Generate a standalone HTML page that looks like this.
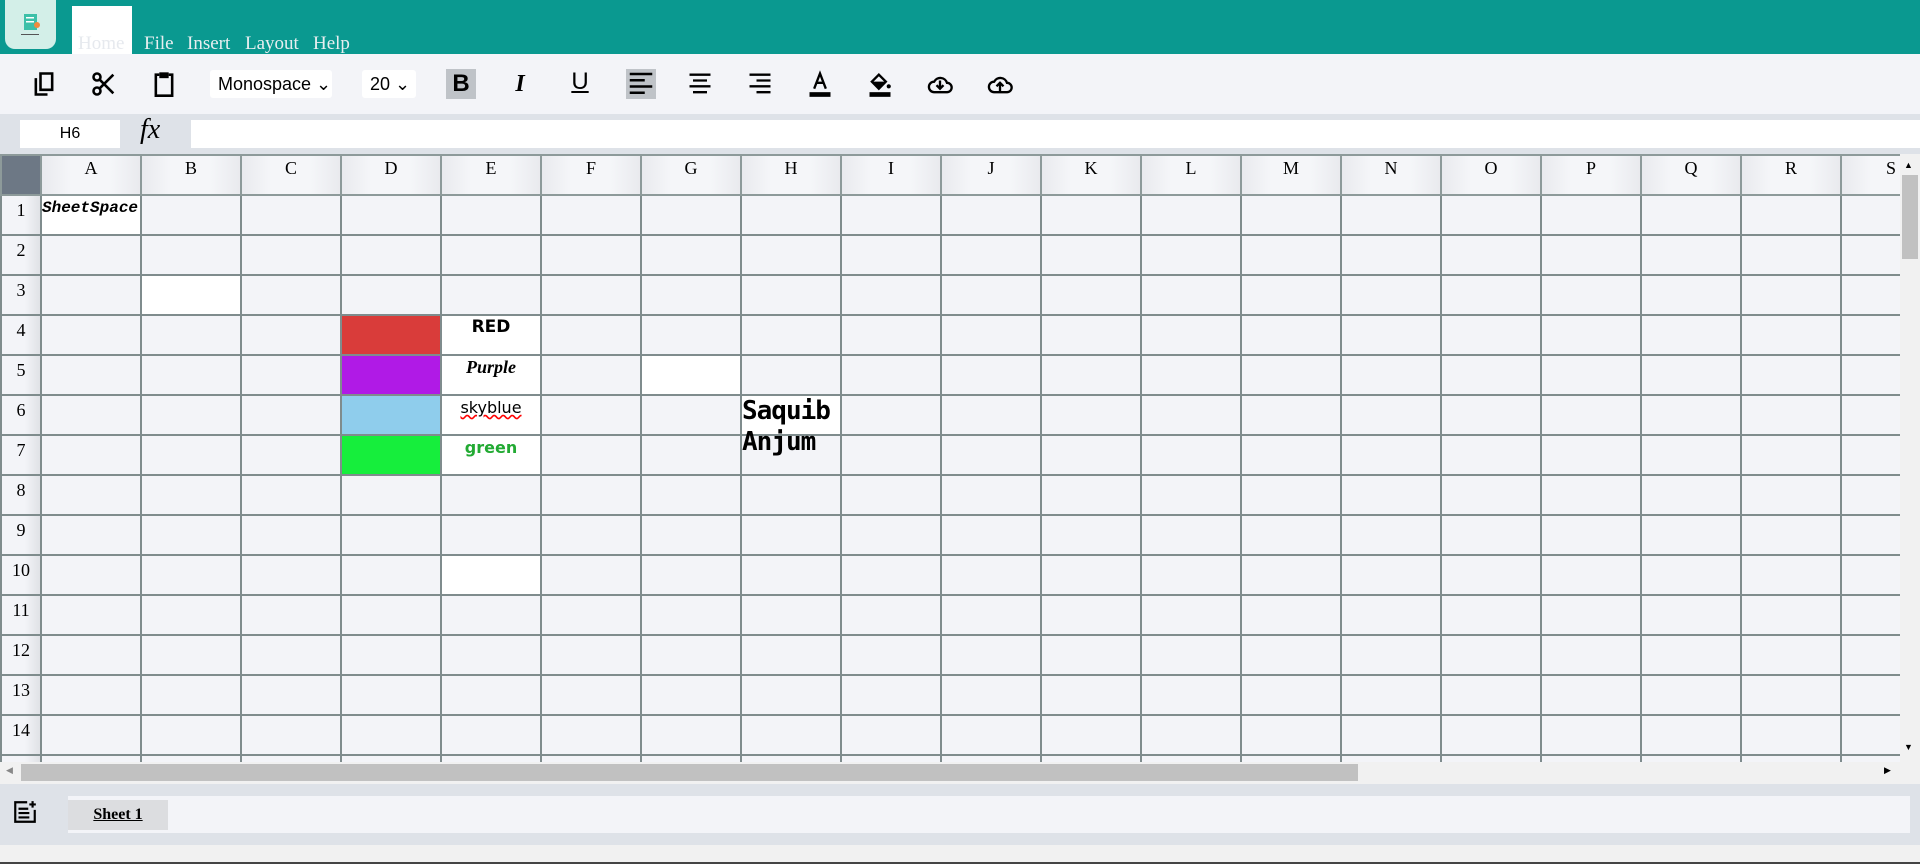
<!DOCTYPE html>
<html><head><meta charset="utf-8"><style>
*{box-sizing:border-box;margin:0;padding:0}
body{width:1920px;height:864px;overflow:hidden;background:#f3f4f8;font-family:"Liberation Serif",serif;position:relative}
.top{position:absolute;left:0;top:0;width:1920px;height:54px;background:#0a9990}
.logo{position:absolute;left:5px;top:0;width:51px;height:49px;background:#d3efe8;border-radius:0 0 10px 10px}
.home{position:absolute;left:72px;top:6px;width:60px;height:48px;background:#fff}
.menu{position:absolute;top:33px;font-size:19px;color:#e8eef0}
.tb{position:absolute;left:0;top:54px;width:1920px;height:60px;background:#f3f4f8}
.ic{position:absolute;top:70px;width:28px;height:28px}
.sel{position:absolute;top:70px;height:28px;background:#fff;font-family:"Liberation Sans",sans-serif;font-size:18px;line-height:28px;padding-left:8px;border-radius:3px}
.fx{position:absolute;left:0;top:114px;width:1920px;height:40px;background:#dee2e8}
table{position:absolute;left:0;top:154px;border-collapse:collapse;table-layout:fixed;width:1940px}
td{border:2px solid #7f8c8d;height:40px;width:100px;background:#f3f4f8;padding:0;font-size:18px}
td.h{text-align:center;vertical-align:top;padding-top:2px;background:linear-gradient(90deg,#e9eaee,#f5f6f9 30%,#f5f6f9 70%,#e9eaee);border-color:#8d9a9a}
td.r{width:40px;text-align:center;vertical-align:top;padding-top:4px;background:linear-gradient(90deg,#f3f4f8 60%,#e0e2e6)}
.w{background:#fff}
</style></head><body>
<div class="top"></div>
<div class="logo"><svg width="51" height="49"><rect x="19" y="14" width="13" height="16" fill="#3cc0a8"/><rect x="21" y="17" width="8" height="1.5" fill="#fff"/><rect x="21" y="21" width="8" height="1.5" fill="#fff"/><circle cx="32" cy="25" r="3" fill="#f08a3c"/><rect x="16" y="34" width="18" height="1" fill="#555"/></svg></div>
<div class="home"></div>
<div class="menu" style="left:78px;color:#e6e9ee">Home</div>
<div class="menu" style="left:144px">File</div>
<div class="menu" style="left:187px">Insert</div>
<div class="menu" style="left:245px">Layout</div>
<div class="menu" style="left:313px">Help</div>
<div class="tb"></div>
<svg class="ic" style="left:30px" viewBox="0 0 24 24"><path d="M9 3h10v14H9z M5 7v14h10" fill="none" stroke="#000" stroke-width="2.2"/></svg>
<svg class="ic" style="left:90px" viewBox="0 0 24 24"><circle cx="6" cy="6" r="3" fill="none" stroke="#000" stroke-width="2.2"/><circle cx="6" cy="18" r="3" fill="none" stroke="#000" stroke-width="2.2"/><path d="M8 8l12 12M8 16l12-12" stroke="#000" stroke-width="2.2"/></svg>
<svg class="ic" style="left:150px" viewBox="0 0 24 24"><path d="M8 4H5v18h14V4h-3" fill="none" stroke="#000" stroke-width="2.2"/><rect x="8" y="2" width="8" height="5" fill="#000"/></svg>
<div class="sel" style="left:210px;width:122px">Monospace &#8964;</div>
<div class="sel" style="left:362px;width:54px">20 &#8964;</div>
<div style="position:absolute;left:446px;top:69px;width:30px;height:30px;background:#bfc3c8;font:bold 24px 'Liberation Sans',sans-serif;text-align:center;line-height:30px">B</div>
<div style="position:absolute;left:508px;top:69px;width:24px;font:italic bold 24px 'Liberation Serif',serif;text-align:center;line-height:30px">I</div>
<div style="position:absolute;left:568px;top:67px;width:24px;font:24px 'Liberation Sans',sans-serif;text-align:center;line-height:30px;text-decoration:underline">U</div>
<svg class="ic" style="left:626px;background:#bfc3c8;width:30px;height:30px;top:69px" viewBox="0 0 24 24"><path d="M3 4h18M3 9h12M3 14h18M3 19h12" stroke="#000" stroke-width="2"/></svg>
<svg class="ic" style="left:686px" viewBox="0 0 24 24"><path d="M3 4h18M6 9h12M3 14h18M6 19h12" stroke="#000" stroke-width="2"/></svg>
<svg class="ic" style="left:746px" viewBox="0 0 24 24"><path d="M3 4h18M9 9h12M3 14h18M9 19h12" stroke="#000" stroke-width="2"/></svg>
<svg class="ic" style="left:806px" viewBox="0 0 24 24"><path d="M7 16L12 3l5 13M9 11h6" fill="none" stroke="#000" stroke-width="2"/><rect x="3" y="19" width="18" height="4" fill="#000"/></svg>
<svg class="ic" style="left:866px" viewBox="0 0 24 24"><path d="M5 10l6-6 6 6-6 6z" fill="none" stroke="#000" stroke-width="2"/><path d="M6 10h11l-6 6z" fill="#000"/><circle cx="19.5" cy="14" r="1.8" fill="#000"/><rect x="3" y="19" width="18" height="4" fill="#000"/></svg>
<svg class="ic" style="left:926px" viewBox="0 0 24 24"><path d="M7 19h11a4 4 0 0 0 0-8 6 6 0 0 0-11-1 4.5 4.5 0 0 0 0 9z" fill="none" stroke="#000" stroke-width="2"/><path d="M12 9v7M9 13l3 3 3-3" fill="none" stroke="#000" stroke-width="2"/></svg>
<svg class="ic" style="left:986px" viewBox="0 0 24 24"><path d="M7 19h11a4 4 0 0 0 0-8 6 6 0 0 0-11-1 4.5 4.5 0 0 0 0 9z" fill="none" stroke="#000" stroke-width="2"/><path d="M12 19v-8M9 14l3-3 3 3" fill="none" stroke="#000" stroke-width="2"/></svg>
<div class="fx"></div>
<div style="position:absolute;left:20px;top:120px;width:100px;height:28px;background:#fff;font:16px 'Liberation Sans',sans-serif;text-align:center;line-height:28px">H6</div>
<div style="position:absolute;left:140px;top:114px;font:italic 28px 'Liberation Serif',serif">fx</div>
<div style="position:absolute;left:191px;top:120px;width:1729px;height:28px;background:#fff"></div>
<table>
<colgroup><col style="width:40px"><col span="19" style="width:100px"></colgroup>
<tr><td class="h r" style="background:#6d7885"></td><td class="h">A</td><td class="h">B</td><td class="h">C</td><td class="h">D</td><td class="h">E</td><td class="h">F</td><td class="h">G</td><td class="h">H</td><td class="h">I</td><td class="h">J</td><td class="h">K</td><td class="h">L</td><td class="h">M</td><td class="h">N</td><td class="h">O</td><td class="h">P</td><td class="h">Q</td><td class="h">R</td><td class="h">S</td></tr>
<tr><td class="r">1</td><td class="w" style="font:italic bold 16px 'Liberation Mono',monospace;vertical-align:top;padding-top:3px">SheetSpace</td><td></td><td></td><td></td><td></td><td></td><td></td><td></td><td></td><td></td><td></td><td></td><td></td><td></td><td></td><td></td><td></td><td></td><td></td></tr>
<tr><td class="r">2</td><td></td><td></td><td></td><td></td><td></td><td></td><td></td><td></td><td></td><td></td><td></td><td></td><td></td><td></td><td></td><td></td><td></td><td></td><td></td></tr>
<tr><td class="r">3</td><td></td><td class="w"></td><td></td><td></td><td></td><td></td><td></td><td></td><td></td><td></td><td></td><td></td><td></td><td></td><td></td><td></td><td></td><td></td><td></td></tr>
<tr><td class="r">4</td><td></td><td></td><td></td><td style="background:#d93c3a"></td><td class="w" style="text-align:center;vertical-align:top;font:bold 17px 'DejaVu Sans',sans-serif;padding-top:1px">RED</td><td></td><td></td><td></td><td></td><td></td><td></td><td></td><td></td><td></td><td></td><td></td><td></td><td></td><td></td></tr>
<tr><td class="r">5</td><td></td><td></td><td></td><td style="background:#b01ae6"></td><td class="w" style="text-align:center;vertical-align:top;font:italic bold 18px 'Liberation Serif',serif;padding-top:1px">Purple</td><td></td><td class="w"></td><td></td><td></td><td></td><td></td><td></td><td></td><td></td><td></td><td></td><td></td><td></td><td></td></tr>
<tr><td class="r">6</td><td></td><td></td><td></td><td style="background:#8fcdec"></td><td class="w" style="text-align:center;vertical-align:top;font:16px 'DejaVu Sans',sans-serif;padding-top:2px;text-decoration:underline wavy red">skyblue</td><td></td><td></td><td class="w" style="position:relative"><div style="position:absolute;left:0;top:0;font:bold 26px 'DejaVu Sans Mono',monospace;line-height:31px;width:130px;letter-spacing:-1px">Saquib<br>Anjum</div></td><td></td><td></td><td></td><td></td><td></td><td></td><td></td><td></td><td></td><td></td><td></td></tr>
<tr><td class="r">7</td><td></td><td></td><td></td><td style="background:#16ee3c"></td><td class="w" style="text-align:center;vertical-align:top;font:bold 16px 'DejaVu Sans',sans-serif;color:#22aa33;padding-top:2px">green</td><td></td><td></td><td></td><td></td><td></td><td></td><td></td><td></td><td></td><td></td><td></td><td></td><td></td><td></td></tr>
<tr><td class="r">8</td><td></td><td></td><td></td><td></td><td></td><td></td><td></td><td></td><td></td><td></td><td></td><td></td><td></td><td></td><td></td><td></td><td></td><td></td><td></td></tr>
<tr><td class="r">9</td><td></td><td></td><td></td><td></td><td></td><td></td><td></td><td></td><td></td><td></td><td></td><td></td><td></td><td></td><td></td><td></td><td></td><td></td><td></td></tr>
<tr><td class="r">10</td><td></td><td></td><td></td><td></td><td class="w"></td><td></td><td></td><td></td><td></td><td></td><td></td><td></td><td></td><td></td><td></td><td></td><td></td><td></td><td></td></tr>
<tr><td class="r">11</td><td></td><td></td><td></td><td></td><td></td><td></td><td></td><td></td><td></td><td></td><td></td><td></td><td></td><td></td><td></td><td></td><td></td><td></td><td></td></tr>
<tr><td class="r">12</td><td></td><td></td><td></td><td></td><td></td><td></td><td></td><td></td><td></td><td></td><td></td><td></td><td></td><td></td><td></td><td></td><td></td><td></td><td></td></tr>
<tr><td class="r">13</td><td></td><td></td><td></td><td></td><td></td><td></td><td></td><td></td><td></td><td></td><td></td><td></td><td></td><td></td><td></td><td></td><td></td><td></td><td></td></tr>
<tr><td class="r">14</td><td></td><td></td><td></td><td></td><td></td><td></td><td></td><td></td><td></td><td></td><td></td><td></td><td></td><td></td><td></td><td></td><td></td><td></td><td></td></tr>
<tr><td class="r">15</td><td></td><td></td><td></td><td></td><td></td><td></td><td></td><td></td><td></td><td></td><td></td><td></td><td></td><td></td><td></td><td></td><td></td><td></td><td></td></tr>
</table>
<div style="position:absolute;left:1900px;top:154px;width:20px;height:630px;background:#f1f1f1"></div>
<div style="position:absolute;left:1902px;top:175px;width:16px;height:84px;background:#c1c1c1"></div>
<div style="position:absolute;left:1904px;top:160px;font-size:9px">&#9650;</div>
<div style="position:absolute;left:1904px;top:742px;font-size:9px">&#9660;</div>
<div style="position:absolute;left:0;top:762px;width:1900px;height:22px;background:#f1f1f1"></div>
<div style="position:absolute;left:21px;top:764px;width:1337px;height:17px;background:#c1c1c1"></div>
<div style="position:absolute;left:6px;top:765px;font-size:9px;color:#888">&#9664;</div>
<div style="position:absolute;left:1884px;top:765px;font-size:9px">&#9654;</div>
<div style="position:absolute;left:0;top:784px;width:1920px;height:61px;background:#dee2e8"></div>
<div style="position:absolute;left:68px;top:796px;width:1842px;height:37px;background:#f3f4f8"></div>
<div style="position:absolute;left:68px;top:800px;width:100px;height:30px;background:#dcdde0;text-align:center;font:bold 16px 'Liberation Serif',serif;line-height:30px;text-decoration:underline">Sheet 1</div>
<svg style="position:absolute;left:12px;top:799px" width="26" height="26" viewBox="0 0 24 24"><path d="M14 3H3v18h18V10" fill="none" stroke="#000" stroke-width="2"/><path d="M6 9h9M6 13h10M6 17h10M19 2v6M16 5h6" stroke="#000" stroke-width="2"/></svg>
<div style="position:absolute;left:0;top:845px;width:1920px;height:19px;background:#f1f1f1;border-bottom:2px solid #444"></div>
</body></html>
